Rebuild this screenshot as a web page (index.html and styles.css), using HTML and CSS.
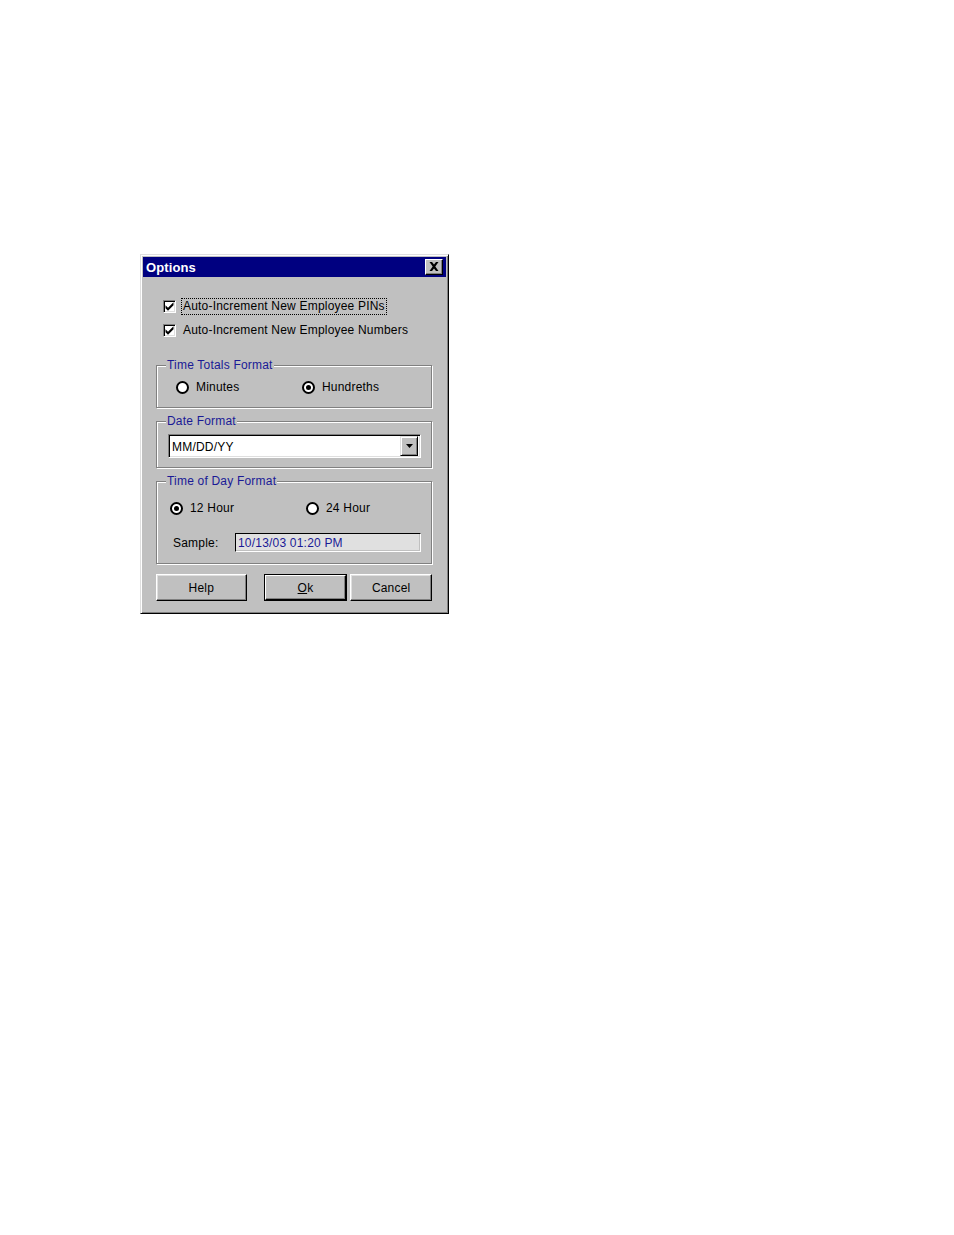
FILE: index.html
```html
<!DOCTYPE html>
<html>
<head>
<meta charset="utf-8">
<title>Options</title>
<link rel="stylesheet" href="styles.css">
</head>
<body>
<div class="dialog">
  <div class="titlebar">
    <span class="title">Options</span>
    <span class="close"><svg width="10" height="9" viewBox="0 0 10 9"><path d="M0.5 0h2.5l2 2.6L7 0h2.5L6.3 4.5 9.5 9H7L5 6.4 3 9H0.5l3.2-4.5z" fill="#000"/></svg></span>
  </div>
  <div class="client">
    <div class="checks">
      <label class="check">
        <span class="box"><svg width="9" height="9" viewBox="0 0 9 9"><path d="M0.5 3.3L3 5.8 8.5 0.3V3.3L3 8.8 0.5 6.3z" fill="#000"/></svg></span>
        <span class="ctext focus">Auto-Increment New Employee PINs</span>
      </label>
      <label class="check">
        <span class="box"><svg width="9" height="9" viewBox="0 0 9 9"><path d="M0.5 3.3L3 5.8 8.5 0.3V3.3L3 8.8 0.5 6.3z" fill="#000"/></svg></span>
        <span class="ctext">Auto-Increment New Employee Numbers</span>
      </label>
    </div>

    <fieldset class="group g1">
      <legend>Time Totals Format</legend>
      <div class="inner i1">
        <div class="radios">
          <label class="radio r1"><span class="dot"></span>Minutes</label>
          <label class="radio"><span class="dot on"></span>Hundreths</label>
        </div>
      </div>
    </fieldset>

    <fieldset class="group g2">
      <legend>Date Format</legend>
      <div class="inner i2">
        <div class="combo">
          <span class="ctxt">MM/DD/YY</span>
          <span class="drop"><svg width="7" height="4" viewBox="0 0 7 4"><path d="M0 0h7L3.5 4z" fill="#000"/></svg></span>
        </div>
      </div>
    </fieldset>

    <fieldset class="group g3">
      <legend>Time of Day Format</legend>
      <div class="inner i3">
        <div class="radios">
          <label class="radio r2"><span class="dot on"></span>12 Hour</label>
          <label class="radio"><span class="dot"></span>24 Hour</label>
        </div>
        <div class="sample">
          <span class="slabel">Sample:</span>
          <span class="sfield">10/13/03 01:20 PM</span>
        </div>
      </div>
    </fieldset>

    <div class="buttons">
      <button class="btn help">Help</button>
      <button class="btn ok"><span class="okin"><u>O</u>k</span></button>
      <button class="btn cancel">Cancel</button>
    </div>
  </div>
</div>
</body>
</html>
```

FILE: styles.css
```css
html, body {
  margin: 0;
  padding: 0;
  background: #fff;
}
body {
  font-family: "Liberation Sans", Arial, sans-serif;
  font-size: 12px;
  letter-spacing: 0.2px;
  color: #000;
}
.dialog {
  margin: 254px 0 0 140px;
  width: 309px;
  height: 360px;
  box-sizing: border-box;
  background: #c0c0c0;
  border: 1px solid;
  border-color: #dfdfdf #000 #000 #dfdfdf;
  box-shadow: inset 1px 1px 0 #fff, inset -1px -1px 0 #808080;
  padding: 2px;
}
.titlebar {
  height: 20px;
  background: #000080;
  display: flex;
  align-items: center;
  justify-content: space-between;
  padding: 0 3px 0 3px;
}
.title {
  color: #fff;
  font-weight: bold;
  font-size: 13px;
  letter-spacing: 0.1px;
}
.close {
  width: 18px;
  height: 16px;
  box-sizing: border-box;
  background: #c0c0c0;
  border: 1px solid;
  border-color: #fff #000 #000 #fff;
  box-shadow: inset -1px -1px 0 #808080;
  display: flex;
  align-items: center;
  justify-content: center;
  padding: 0 1px 1px 0;
}
.client {
  padding: 0 14px 0 13px;
}
.checks {
  padding: 21px 0 0 7px;
  display: flex;
  flex-direction: column;
  gap: 7px;
}
.check {
  display: flex;
  align-items: center;
  height: 17px;
}
.box {
  width: 13px;
  height: 13px;
  box-sizing: border-box;
  background: #fff;
  border: 1px solid;
  border-color: #808080 #fff #fff #808080;
  box-shadow: inset 1px 1px 0 #000, inset -1px -1px 0 #dfdfdf;
  display: flex;
  align-items: center;
  justify-content: center;
  margin-right: 5px;
}
.ctext {
  line-height: 15px;
  padding: 0 1px;
  border: 1px solid transparent;
}
.focus {
  border: 1px dotted #000;
}
.group {
  margin: 0;
  border: 1px solid #808080;
  box-shadow: 1px 1px 0 #fff, inset 1px 1px 0 #fff;
  padding: 0;
  min-width: 0;
  box-sizing: border-box;
}
.group legend {
  margin-left: 9px;
  padding: 0 1px;
  line-height: 14px;
  color: #1a1a96;
  background: #c0c0c0;
}
.g1 { margin-top: 19px; height: 50px; }
.g2 { margin-top: 6px; height: 54px; }
.g3 { margin-top: 6px; height: 90px; }
.i1 { padding: 7px 0 0 19px; }
.i2 { padding: 6px 0 0 11px; }
.i3 { padding: 12px 0 0 13px; }
.radios {
  display: flex;
  height: 16px;
  align-items: center;
}
.radio {
  display: flex;
  align-items: center;
}
.r1 { width: 126px; }
.r2 { width: 136px; }
.dot {
  width: 13px;
  height: 13px;
  box-sizing: border-box;
  border-radius: 50%;
  background: #fff;
  border: 2px solid #000;
  margin-right: 7px;
  display: flex;
  align-items: center;
  justify-content: center;
}
.dot.on::after {
  content: "";
  width: 5px;
  height: 5px;
  border-radius: 50%;
  background: #000;
}
.combo {
  width: 253px;
  height: 24px;
  box-sizing: border-box;
  background: #fff;
  border: 1px solid;
  border-color: #808080 #fff #fff #808080;
  box-shadow: inset 1px 1px 0 #000, inset -1px -1px 0 #dfdfdf;
  display: flex;
  align-items: center;
  justify-content: space-between;
  padding: 2px 2px 2px 3px;
}
.ctxt {
  line-height: 14px;
  padding-top: 1px;
}
.drop {
  width: 18px;
  height: 20px;
  box-sizing: border-box;
  background: #c0c0c0;
  border: 1px solid;
  border-color: #dfdfdf #000 #000 #dfdfdf;
  box-shadow: inset 1px 1px 0 #fff, inset -1px -1px 0 #808080;
  display: flex;
  align-items: center;
  justify-content: center;
}
.sample {
  margin-top: 17px;
  display: flex;
  align-items: center;
  height: 19px;
  padding-left: 3px;
}
.slabel {
  width: 62px;
  padding-top: 1px;
}
.sfield {
  width: 186px;
  height: 19px;
  box-sizing: border-box;
  background: #e0e0e0;
  border: 1px solid;
  border-color: #000 #fff #fff #000;
  box-shadow: inset -1px -1px 0 #c0c0c0;
  color: #1a1a96;
  line-height: 18px;
  padding-left: 2px;
}
.buttons {
  margin-top: 10px;
  display: flex;
  height: 27px;
}
.btn {
  font-family: "Liberation Sans", Arial, sans-serif;
  font-size: 12px;
  letter-spacing: 0.2px;
  color: #000;
  background: #c0c0c0;
  border: 1px solid;
  border-color: #fff #000 #000 #fff;
  box-shadow: inset -1px -1px 0 #808080, inset 1px 1px 0 #dfdfdf;
  height: 27px;
  padding: 0;
  margin: 0;
}
.help { width: 91px; }
.ok {
  width: 84px;
  margin-left: 17px;
  border: 1px solid #000;
  box-shadow: none;
}
.okin {
  display: flex;
  align-items: center;
  justify-content: center;
  height: 100%;
  box-sizing: border-box;
  border: 1px solid;
  border-color: #fff #000 #000 #fff;
  box-shadow: inset -1px -1px 0 #808080;
}
.cancel {
  width: 82px;
  margin-left: 3px;
}
```
